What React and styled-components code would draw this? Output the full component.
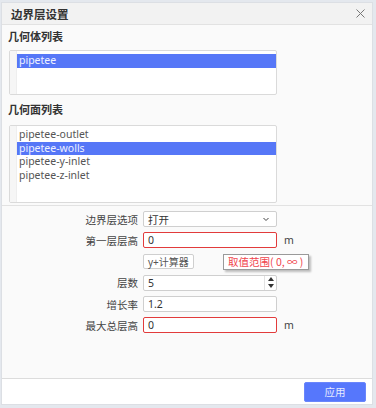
import React from "react";
import styled, { createGlobalStyle } from "styled-components";

const Global = createGlobalStyle`
  html, body { margin: 0; padding: 0; background: #e4e8ee; }
  body { font-family: "Noto Sans", "Noto Sans CJK SC", sans-serif; }
  #root { width: 376px; height: 408px; }
`;

const Frame = styled.div`
  width: 376px;
  height: 408px;
  box-sizing: border-box;
  padding: 2px 3px 3px 1px;
  display: flex;
`;

const Dialog = styled.div`
  flex: 1;
  display: flex;
  flex-direction: column;
  background: #fafafa;
  border: 1px solid #dcdfe4;
  box-sizing: border-box;
`;

const TitleBar = styled.div`
  height: 21px;
  flex: none;
  display: flex;
  align-items: center;
  justify-content: space-between;
  padding: 0 7px 0 9px;
  background: #f2f2f2;
  border-bottom: 1px solid #e2e2e2;
  font-family: "Noto Sans CJK SC", sans-serif;
  font-weight: 700;
  font-size: 11.5px;
  color: #333;
`;

const CloseIcon = styled.svg`
  width: 9px;
  height: 9px;
`;

const Body = styled.div`
  flex: 1;
  display: flex;
  flex-direction: column;
`;

const ListSection = styled.div`
  padding: 3px 0 2px 6px;
  display: flex;
  flex-direction: column;
`;

const Heading = styled.div`
  font-family: "Noto Sans CJK SC", sans-serif;
  font-weight: 700;
  font-size: 11px;
  color: #333;
  height: 17px;
  line-height: 17px;
  margin-bottom: ${(p) => p.$gap}px;
`;

const ListBox = styled.div`
  width: 268px;
  height: ${(p) => p.$h}px;
  margin-left: 1px;
  box-sizing: border-box;
  border: 1px solid #dadada;
  border-radius: 2px;
  background: #fff;
  display: flex;
  margin-bottom: ${(p) => p.$mb}px;
`;

const Gutter = styled.div`
  width: 6px;
  background: #f6f6f6;
  border-right: 1px solid #eeeeee;
  flex: none;
`;

const Items = styled.div`
  flex: 1;
  padding-top: ${(p) => p.$pt}px;
`;

const Item = styled.div`
  height: 13.5px;
  line-height: 13.5px;
  font-size: 10.5px;
  padding-left: 2px;
  color: ${(p) => (p.$sel ? "#eef1ff" : "#555")};
  background: ${(p) => (p.$sel ? "#5677f7" : "transparent")};
`;

const Divider = styled.div`
  height: 1px;
  background: #e2e2e2;
`;

const Form = styled.div`
  padding-top: 5px;
  display: grid;
  grid-template-columns: 136px 134px auto;
  column-gap: 5px;
  row-gap: 5.3px;
  align-items: center;
`;

const Label = styled.div`
  font-family: "Noto Sans CJK SC", sans-serif;
  font-size: 10.5px;
  color: #444;
  text-align: right;
`;

const Field = styled.div`
  height: 16px;
  box-sizing: border-box;
  border: 1px solid ${(p) => (p.$err ? "#e23b3b" : "#cfcfcf")};
  border-radius: 2px;
  background: #fff;
  display: flex;
  align-items: center;
  padding-left: 4px;
  font-size: 10.5px;
  color: #333;
  font-family: "Noto Sans", "Noto Sans CJK SC", sans-serif;
`;

const FieldText = styled.span`
  flex: 1;
  font-family: ${(p) => (p.$cjk ? '"Noto Sans CJK SC", sans-serif' : "inherit")};
`;

const Chevron = styled.svg`
  width: 8px;
  height: 8px;
  margin-right: 6px;
`;

const Spinner = styled.div`
  width: 11px;
  align-self: stretch;
  border-left: 1px solid #e2e2e2;
  display: flex;
  flex-direction: column;
  align-items: center;
  justify-content: space-around;
`;

const Unit = styled.div`
  font-size: 10.5px;
  color: #444;
  padding-left: 2px;
`;

const CalcRow = styled.div`
  grid-column: 2 / 4;
  display: flex;
  align-items: center;
  position: relative;
  height: 16px;
`;

const CalcButton = styled.div`
  height: 15px;
  box-sizing: border-box;
  padding: 0 4px;
  border: 1px solid #cfcfcf;
  border-radius: 2px;
  background: #fff;
  font-family: "Noto Sans", "Noto Sans CJK SC", sans-serif;
  font-size: 10px;
  color: #555;
  display: flex;
  align-items: center;
`;

const Tip = styled.div`
  position: absolute;
  left: 80px;
  top: 0px;
  height: 16px;
  box-sizing: border-box;
  padding: 0 5px 0 4px;
  border: 1px solid #9a9a9a;
  background: #fff;
  box-shadow: 2px 2px 2px rgba(0, 0, 0, 0.25);
  font-family: "Noto Sans CJK SC", sans-serif;
  font-size: 10.5px;
  color: #f0444c;
  display: flex;
  align-items: center;
  white-space: nowrap;
`;

const Empty = styled.div``;

const Spacer = styled.div`
  flex: 1;
`;

const Footer = styled.div`
  height: 25px;
  flex: none;
  background: #fff;
  border-top: 1px solid #dcdcdc;
  display: flex;
  align-items: center;
  justify-content: flex-end;
  padding-right: 6px;
`;

const Apply = styled.div`
  width: 62px;
  height: 20px;
  border-radius: 2px;
  background: #5677fc;
  border: 1px solid #6a86fb;
  box-sizing: border-box;
  color: #e6ebff;
  font-family: "Noto Sans CJK SC", sans-serif;
  font-size: 10.5px;
  display: flex;
  align-items: center;
  justify-content: center;
`;

const Arrow = ({ up }) => (
  <svg width="6" height="4" viewBox="0 0 6 4">
    <path d={up ? "M0 4 L3 0 L6 4 Z" : "M0 0 L3 4 L6 0 Z"} fill="#333" />
  </svg>
);

export default function App() {
  return (
    <Frame>
      <Global />
      <Dialog>
        <TitleBar>
          <span>边界层设置</span>
          <CloseIcon viewBox="0 0 9 9">
            <path d="M0.5 0.5 L8.5 8.5 M8.5 0.5 L0.5 8.5" stroke="#777" strokeWidth="1" />
          </CloseIcon>
        </TitleBar>
        <Body>
          <ListSection>
            <Heading $gap={5}>几何体列表</Heading>
            <ListBox $h={45} $mb={6}>
              <Gutter />
              <Items $pt={3}>
                <Item $sel>pipetee</Item>
              </Items>
            </ListBox>
            <Heading $gap={7}>几何面列表</Heading>
            <ListBox $h={78} $mb={0}>
              <Gutter />
              <Items $pt={2}>
                <Item>pipetee-outlet</Item>
                <Item $sel>pipetee-wolls</Item>
                <Item>pipetee-y-inlet</Item>
                <Item>pipetee-z-inlet</Item>
              </Items>
            </ListBox>
          </ListSection>
          <Divider />
          <Form>
            <Label>边界层选项</Label>
            <Field>
              <FieldText $cjk>打开</FieldText>
              <Chevron viewBox="0 0 8 8">
                <path d="M1.5 3 L4 5.5 L6.5 3" fill="none" stroke="#444" strokeWidth="1" />
              </Chevron>
            </Field>
            <Empty />

            <Label>第一层层高</Label>
            <Field $err>
              <FieldText>0</FieldText>
            </Field>
            <Unit>m</Unit>

            <Empty />
            <CalcRow>
              <CalcButton>y+计算器</CalcButton>
              <Tip>取值范围( 0, ∞ )</Tip>
            </CalcRow>

            <Label>层数</Label>
            <Field>
              <FieldText>5</FieldText>
              <Spinner>
                <Arrow up />
                <Arrow />
              </Spinner>
            </Field>
            <Empty />

            <Label>增长率</Label>
            <Field>
              <FieldText>1.2</FieldText>
            </Field>
            <Empty />

            <Label>最大总层高</Label>
            <Field $err>
              <FieldText>0</FieldText>
            </Field>
            <Unit>m</Unit>
          </Form>
          <Spacer />
        </Body>
        <Footer>
          <Apply>应用</Apply>
        </Footer>
      </Dialog>
    </Frame>
  );
}
